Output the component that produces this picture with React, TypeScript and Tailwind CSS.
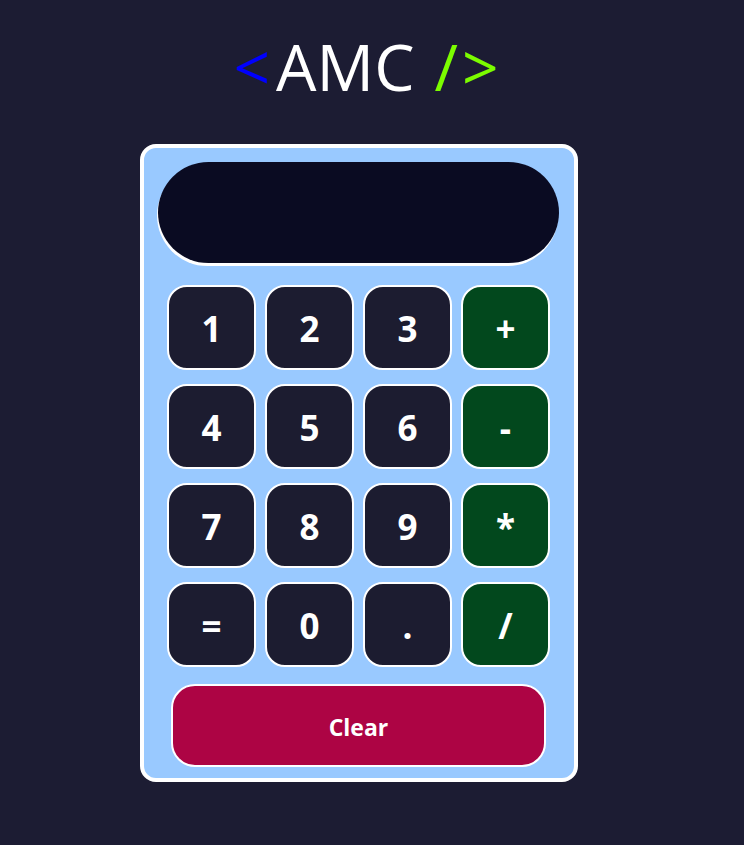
import React from "react";

const keys: { label: string; op?: boolean }[] = [
  { label: "1" }, { label: "2" }, { label: "3" }, { label: "+", op: true },
  { label: "4" }, { label: "5" }, { label: "6" }, { label: "-", op: true },
  { label: "7" }, { label: "8" }, { label: "9" }, { label: "*", op: true },
  { label: "=" }, { label: "0" }, { label: "." }, { label: "/", op: true },
];

export default function App() {
  return (
    <div
      className="min-h-[845px] w-full bg-[#1c1c33] flex flex-col items-center pr-[26px]"
      style={{ fontFamily: '"Open Sans", "Noto Sans", sans-serif' }}
    >
      <h1 className="mt-[27px] ml-[14px] h-[80px] leading-[80px] text-[64px] font-normal text-white flex items-center">
        <span className="text-[#0000ff] mr-[6px]">&lt;</span>
        <span>AMC</span>
        <span className="text-[#7cfc00] ml-[20px]">/</span>
        <span className="text-[#7cfc00] ml-[4px]">&gt;</span>
      </h1>
      <div className="mt-[37px] w-[438px] border-4 border-white rounded-[16px] bg-[#99c9ff] pt-[14px] pb-[11px] pl-[14px] pr-[15px] flex flex-col">
        <div className="w-[401px] h-[101px] rounded-full bg-[#0a0b22] shadow-[-1px_3px_0_#ffffff]" />
        <div className="mt-[22px] ml-[9px] grid grid-cols-[repeat(4,89px)] gap-x-[9px] gap-y-[14px]">
          {keys.map((k) => (
            <button
              key={k.label}
              className={`h-[85px] w-[89px] rounded-[20px] border-2 border-white text-white font-bold text-[35px] pt-[3px] flex items-center justify-center ${
                k.op ? "bg-[#02481d]" : "bg-[#1c1c30]"
              }`}
            >
              {k.label}
            </button>
          ))}
        </div>
        <button className="mt-[17px] ml-[13px] w-[375px] h-[83px] rounded-[24px] border-2 border-white bg-[#ad0444] text-white font-bold text-[23px] pt-[3px]">
          Clear
        </button>
      </div>
    </div>
  );
}
